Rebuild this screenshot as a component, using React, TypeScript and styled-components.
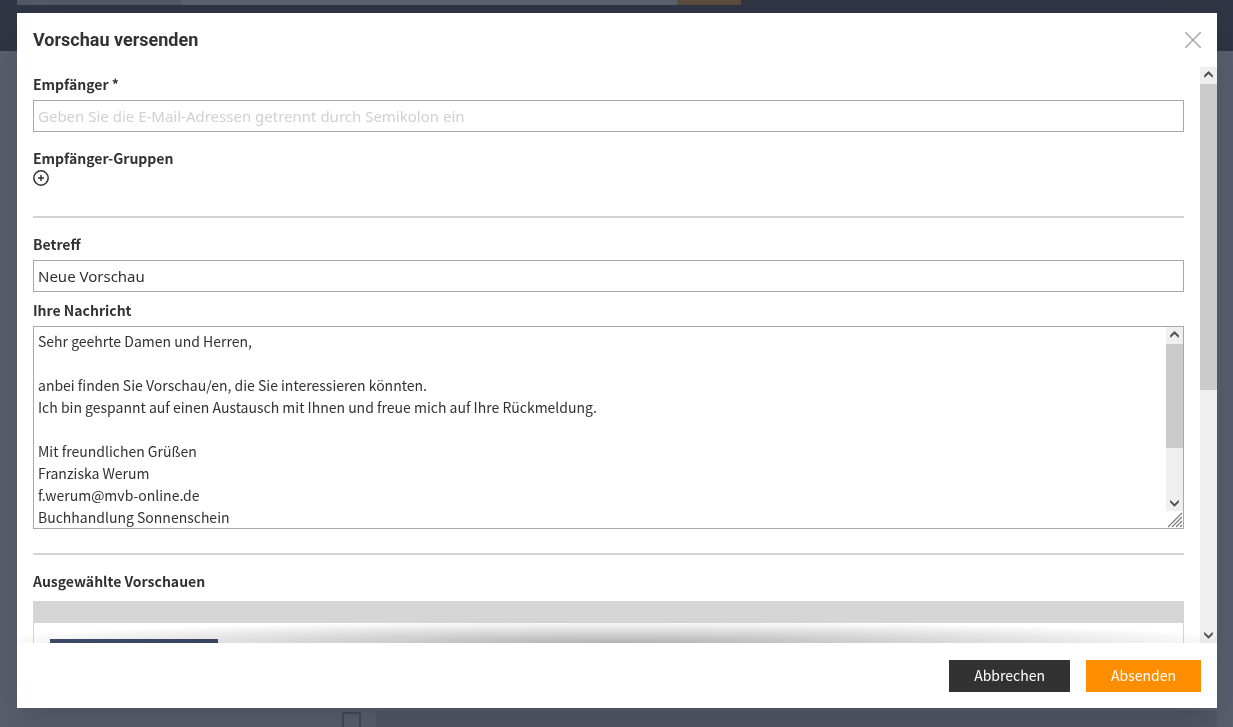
import React from "react";
import styled, { createGlobalStyle } from "styled-components";

const sans = `"Noto Sans CJK SC", "Noto Sans", sans-serif`;
const inputSans = `"Noto Sans", "Open Sans", sans-serif`;
const ink = "#323232";

const GlobalStyle = createGlobalStyle`
  *, *::before, *::after { box-sizing: border-box; }
  body { margin: 0; background: #5a616f; color: ${ink}; font: 14px/22px ${sans}; overflow: hidden; }
`;

const Backdrop = styled.div`
  height: 100vh;
  display: flex;
  flex-direction: column;
  justify-content: space-between;
`;

const TopBar = styled.div`
  height: 51px;
  padding: 0 17px;
  background: #303645;
`;

const SearchStrip = styled.div`
  display: flex;
  height: 5px;
`;

const StripPart = styled.div<{ $width: number; $color: string }>`
  width: ${(p) => p.$width}px;
  background: ${(p) => p.$color};
`;

const ListStrip = styled.div`
  display: flex;
  height: 16px;
  padding: 0 16px 0 342px;
  gap: 15px;
`;

const ListTick = styled.div`
  width: 19px;
  height: 20px;
  margin-top: 1px;
  border: 2px solid #444b5e;
  border-radius: 2px;
`;

const ListPanel = styled.div`
  flex: 1;
  background: #535967;
`;

const Overlay = styled.div`
  position: fixed;
  inset: 0;
  display: flex;
  padding: 13px 16px 19px 17px;
`;

const Dialog = styled.form`
  flex: 1;
  min-width: 0;
  display: flex;
  flex-direction: column;
  background: #fff;
  box-shadow: 0 11px 15px -7px rgba(0, 0, 0, 0.04), 0 24px 38px 3px rgba(0, 0, 0, 0.08),
    0 9px 46px 8px rgba(0, 0, 0, 0.07);
`;

const DialogHeader = styled.header`
  display: flex;
  justify-content: space-between;
  align-items: center;
  height: 54px;
  padding: 0 16px;
`;

const Title = styled.h1`
  margin: 0;
  font: bold 18px/24px "Roboto", "Liberation Sans", sans-serif;
`;

const IconButton = styled.button`
  display: flex;
  padding: 0;
  border: 0;
  background: none;
  color: inherit;
  cursor: pointer;
`;

const DialogBody = styled.div`
  position: relative;
  flex: 1;
  min-height: 0;
  display: flex;
  overflow: hidden;
`;

const Content = styled.div`
  flex: 1;
  min-width: 0;
  overflow: hidden;
  padding: 6px 16px 0;
`;

const Field = styled.div<{ $gap?: number }>`
  display: flex;
  flex-direction: column;
  gap: 5px;
  margin-bottom: ${(p) => p.$gap ?? 0}px;
`;

const Label = styled.label`
  font-weight: bold;
`;

const Group = styled.div`
  display: flex;
  flex-direction: column;
  align-items: flex-start;
  gap: 1px;
  margin-bottom: 30px;
`;

const GroupTitle = styled.h2`
  margin: 0;
  font: bold 14px/22px ${sans};
`;

const TextInput = styled.input`
  width: 100%;
  height: 32px;
  padding: 0 4px;
  border: 1px solid #a9a9a9;
  border-radius: 0;
  background: #fff;
  color: ${ink};
  font: 15px/22px ${inputSans};
  outline: 0;
  &::placeholder { color: #d0d0d0; opacity: 1; }
`;

const Divider = styled.hr`
  height: 2px;
  margin: 0 0 15px;
  border: 0;
  background: #d5d5d5;
`;

const MessageBox = styled.div`
  display: flex;
  height: 203px;
  border: 1px solid #a9a9a9;
`;

const Message = styled.textarea`
  flex: 1;
  min-width: 0;
  padding: 3px 4px 0;
  border: 0;
  background: none;
  color: ${ink};
  font: 14px/22px ${sans};
  outline: 0;
  resize: none;
  overflow: hidden;
`;

const Track = styled.div`
  display: flex;
  flex-direction: column;
  flex: 1;
  width: 17px;
  background: #efefef;
`;

const Thumb = styled.div<{ $share: number }>`
  flex: ${(p) => p.$share} 0 0;
  background: #cbcbcb;
`;

const TrackRest = styled.div<{ $share: number }>`
  flex: ${(p) => p.$share} 0 0;
`;

const ScrollSide = styled.div`
  display: flex;
  flex-direction: column;
  width: 17px;
`;

const SelectionHead = styled.div`
  height: 22px;
  margin-top: 9px;
  background: #d5d5d5;
`;

const SelectionList = styled.div`
  padding: 16px;
  border: 1px solid #d5d5d5;
  border-top: 0;
`;

const Cover = styled.div`
  width: 168px;
  height: 240px;
  background: #3f4c6e;
`;

const ScrollShade = styled.div`
  position: absolute;
  left: 0;
  right: 0;
  bottom: 0;
  height: 22px;
  pointer-events: none;
  background: radial-gradient(ellipse 54% 22px at 50% 100%, rgba(0, 0, 0, 0.3), transparent);
`;

const DialogFooter = styled.footer`
  display: flex;
  justify-content: flex-end;
  gap: 16px;
  height: 65px;
  padding: 17px 16px 16px;
`;

const Button = styled.button<{ $primary?: boolean }>`
  height: 32px;
  padding: 0 25px 2px;
  border: 0;
  background: ${(p) => (p.$primary ? "#ff8d00" : ink)};
  color: #fff;
  font: 14px/22px ${sans};
  cursor: pointer;
`;

const Arrow = ({ down }: { down?: boolean }) => (
  <svg width="17" height="17" viewBox="0 0 17 17" aria-hidden="true">
    <path
      d={down ? "M4.2 5.8v2.8l4.3 4.1 4.3-4.1V5.8L8.5 9.9z" : "M4.2 11V8.2l4.3-4.1 4.3 4.1V11L8.5 6.9z"}
      fill="#505050"
    />
  </svg>
);

const ScrollTrack = ({ thumb, rest }: { thumb: number; rest: number }) => (
  <Track>
    <Arrow />
    <Thumb $share={thumb} />
    <TrackRest $share={rest} />
    <Arrow down />
  </Track>
);

const message = `Sehr geehrte Damen und Herren,

anbei finden Sie Vorschau/en, die Sie interessieren könnten.
Ich bin gespannt auf einen Austausch mit Ihnen und freue mich auf Ihre Rückmeldung.

Mit freundlichen Grüßen
Franziska Werum
f.werum@mvb-online.de
Buchhandlung Sonnenschein`;

export default function App() {
  return (
    <>
      <GlobalStyle />
      <Backdrop aria-hidden="true">
        <TopBar>
          <SearchStrip>
            <StripPart $width={164} $color="#545a68" />
            <StripPart $width={496} $color="#5b6270" />
            <StripPart $width={64} $color="#5c4d3e" />
          </SearchStrip>
        </TopBar>
        <ListStrip>
          <ListTick />
          <ListPanel />
        </ListStrip>
      </Backdrop>
      <Overlay>
        <Dialog role="dialog" aria-labelledby="dialog-title" onSubmit={(e) => e.preventDefault()}>
          <DialogHeader>
            <Title id="dialog-title">Vorschau versenden</Title>
            <IconButton type="button" aria-label="Schließen">
              <svg width="16" height="16" viewBox="0 0 16 16" stroke="#a9a9a9" strokeWidth="1.5">
                <path d="M0 0l16 16M16 0L0 16" />
              </svg>
            </IconButton>
          </DialogHeader>
          <DialogBody>
            <Content>
              <Field $gap={15}>
                <Label htmlFor="recipients">Empfänger *</Label>
                <TextInput
                  id="recipients"
                  placeholder="Geben Sie die E-Mail-Adressen getrennt durch Semikolon ein"
                />
              </Field>
              <Group>
                <GroupTitle>Empfänger-Gruppen</GroupTitle>
                <IconButton type="button" aria-label="Gruppe hinzufügen">
                  <svg width="16" height="16" viewBox="0 0 16 16" fill="none" stroke={ink} strokeWidth="1.5">
                    <circle cx="8" cy="8" r="7.2" />
                    <path d="M8 5v6M5 8h6" />
                  </svg>
                </IconButton>
              </Group>
              <Divider />
              <Field $gap={7}>
                <Label htmlFor="subject">Betreff</Label>
                <TextInput id="subject" defaultValue="Neue Vorschau" />
              </Field>
              <Field $gap={24}>
                <Label htmlFor="message">Ihre Nachricht</Label>
                <MessageBox>
                  <Message id="message" defaultValue={message} />
                  <ScrollSide>
                    <ScrollTrack thumb={104} rest={46} />
                    <svg width="17" height="17" viewBox="0 0 17 17" stroke="#777" strokeWidth="1.1" aria-hidden="true">
                      <path d="M2 16L16 2M6 16L16 6M10 16l6-6M14 16l2-2" />
                    </svg>
                  </ScrollSide>
                </MessageBox>
              </Field>
              <Divider />
              <GroupTitle>Ausgewählte Vorschauen</GroupTitle>
              <SelectionHead />
              <SelectionList>
                <Cover />
              </SelectionList>
            </Content>
            <ScrollSide>
              <ScrollTrack thumb={306} rest={236} />
            </ScrollSide>
            <ScrollShade />
          </DialogBody>
          <DialogFooter>
            <Button type="button">Abbrechen</Button>
            <Button type="submit" $primary>
              Absenden
            </Button>
          </DialogFooter>
        </Dialog>
      </Overlay>
    </>
  );
}
